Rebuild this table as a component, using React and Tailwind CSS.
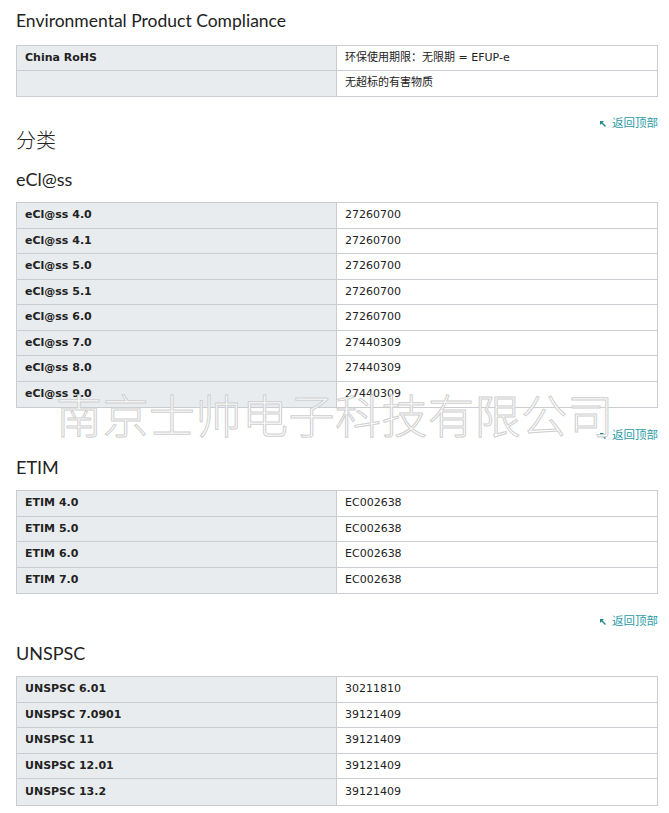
import React from 'react';

const sections = [
  {
    title: 'eCl@ss',
    rows: [
      ['eCl@ss 4.0', '27260700'],
      ['eCl@ss 4.1', '27260700'],
      ['eCl@ss 5.0', '27260700'],
      ['eCl@ss 5.1', '27260700'],
      ['eCl@ss 6.0', '27260700'],
      ['eCl@ss 7.0', '27440309'],
      ['eCl@ss 8.0', '27440309'],
      ['eCl@ss 9.0', '27440309'],
    ],
  },
  {
    title: 'ETIM',
    rows: [
      ['ETIM 4.0', 'EC002638'],
      ['ETIM 5.0', 'EC002638'],
      ['ETIM 6.0', 'EC002638'],
      ['ETIM 7.0', 'EC002638'],
    ],
  },
  {
    title: 'UNSPSC',
    rows: [
      ['UNSPSC 6.01', '30211810'],
      ['UNSPSC 7.0901', '39121409'],
      ['UNSPSC 11', '39121409'],
      ['UNSPSC 12.01', '39121409'],
      ['UNSPSC 13.2', '39121409'],
    ],
  },
];

function SpecTable({ rows, rowH = 'h-[25.5px]' }) {
  return (
    <div className="border border-[#c9cdd1] text-[11px] font-['DejaVu_Sans','Noto_Sans_CJK_SC',sans-serif] text-[#222]">
      {rows.map(([label, value], i) => (
        <div key={i} className={`flex ${rowH} ${i < rows.length - 1 ? 'border-b border-[#c9cdd1]' : ''}`}>
          <div className="w-[320px] shrink-0 bg-[#e9ecef] border-r border-[#c9cdd1] px-2 flex items-center font-bold">
            {label}
          </div>
          <div className="flex-1 bg-white px-2 flex items-center">{value}</div>
        </div>
      ))}
    </div>
  );
}

function BackToTop({ className = '' }) {
  return (
    <div className={`flex justify-end items-center h-[14px] ${className}`}>
      <a href="#top" className="flex items-center gap-[5px] text-[11.5px] leading-none text-[#2c9aa6] font-['Noto_Sans_CJK_SC',sans-serif]">
        <svg width="8" height="8" viewBox="0 0 8 8" className="mt-[1px]">
          <path d="M1 1 L5 1 L1 5 Z" fill="#1f8c8c" />
          <path d="M2.5 2.5 L6.5 6.5" stroke="#1f8c8c" strokeWidth="1.4" />
        </svg>
        返回顶部
      </a>
    </div>
  );
}

export default function App() {
  return (
    <div className="relative min-h-[813px] bg-white pl-4 pr-[11px] pt-[9px] font-['Lato',sans-serif] text-[#222]">
      <h2 className="text-[17.5px] leading-6 h-6">Environmental Product Compliance</h2>

      <div className="mt-[12px]">
        <SpecTable
          rowH="h-[25px]"
          rows={[
            ['China RoHS', '环保使用期限：无限期 = EFUP-e'],
            ['', '无超标的有害物质'],
          ]}
        />
      </div>

      <BackToTop className="mt-[19px]" />
      <h2 className="mt-[-2px] text-[20px] leading-6 h-6 font-['Noto_Sans_CJK_SC',sans-serif] font-light">分类</h2>

      {sections.map((s, idx) => (
        <div key={s.title}>
          {idx > 0 && <BackToTop className="mt-[20px]" />}
          <h3 className={`${idx === 0 ? 'mt-[15px]' : 'mt-[13px]'} mb-[11px] text-[18px] leading-6 h-6`}>{s.title}</h3>
          <SpecTable rows={s.rows} />
        </div>
      ))}

      {/* watermark */}
      <div className="absolute left-[56px] top-[385px] pointer-events-none select-none whitespace-nowrap text-[46px] leading-[56px] tracking-[0.5px] text-white/90 font-['Noto_Sans_CJK_SC',sans-serif] font-light [-webkit-text-stroke:1px_#cfcfcf]">
        南京士帅电子科技有限公司
      </div>
    </div>
  );
}
